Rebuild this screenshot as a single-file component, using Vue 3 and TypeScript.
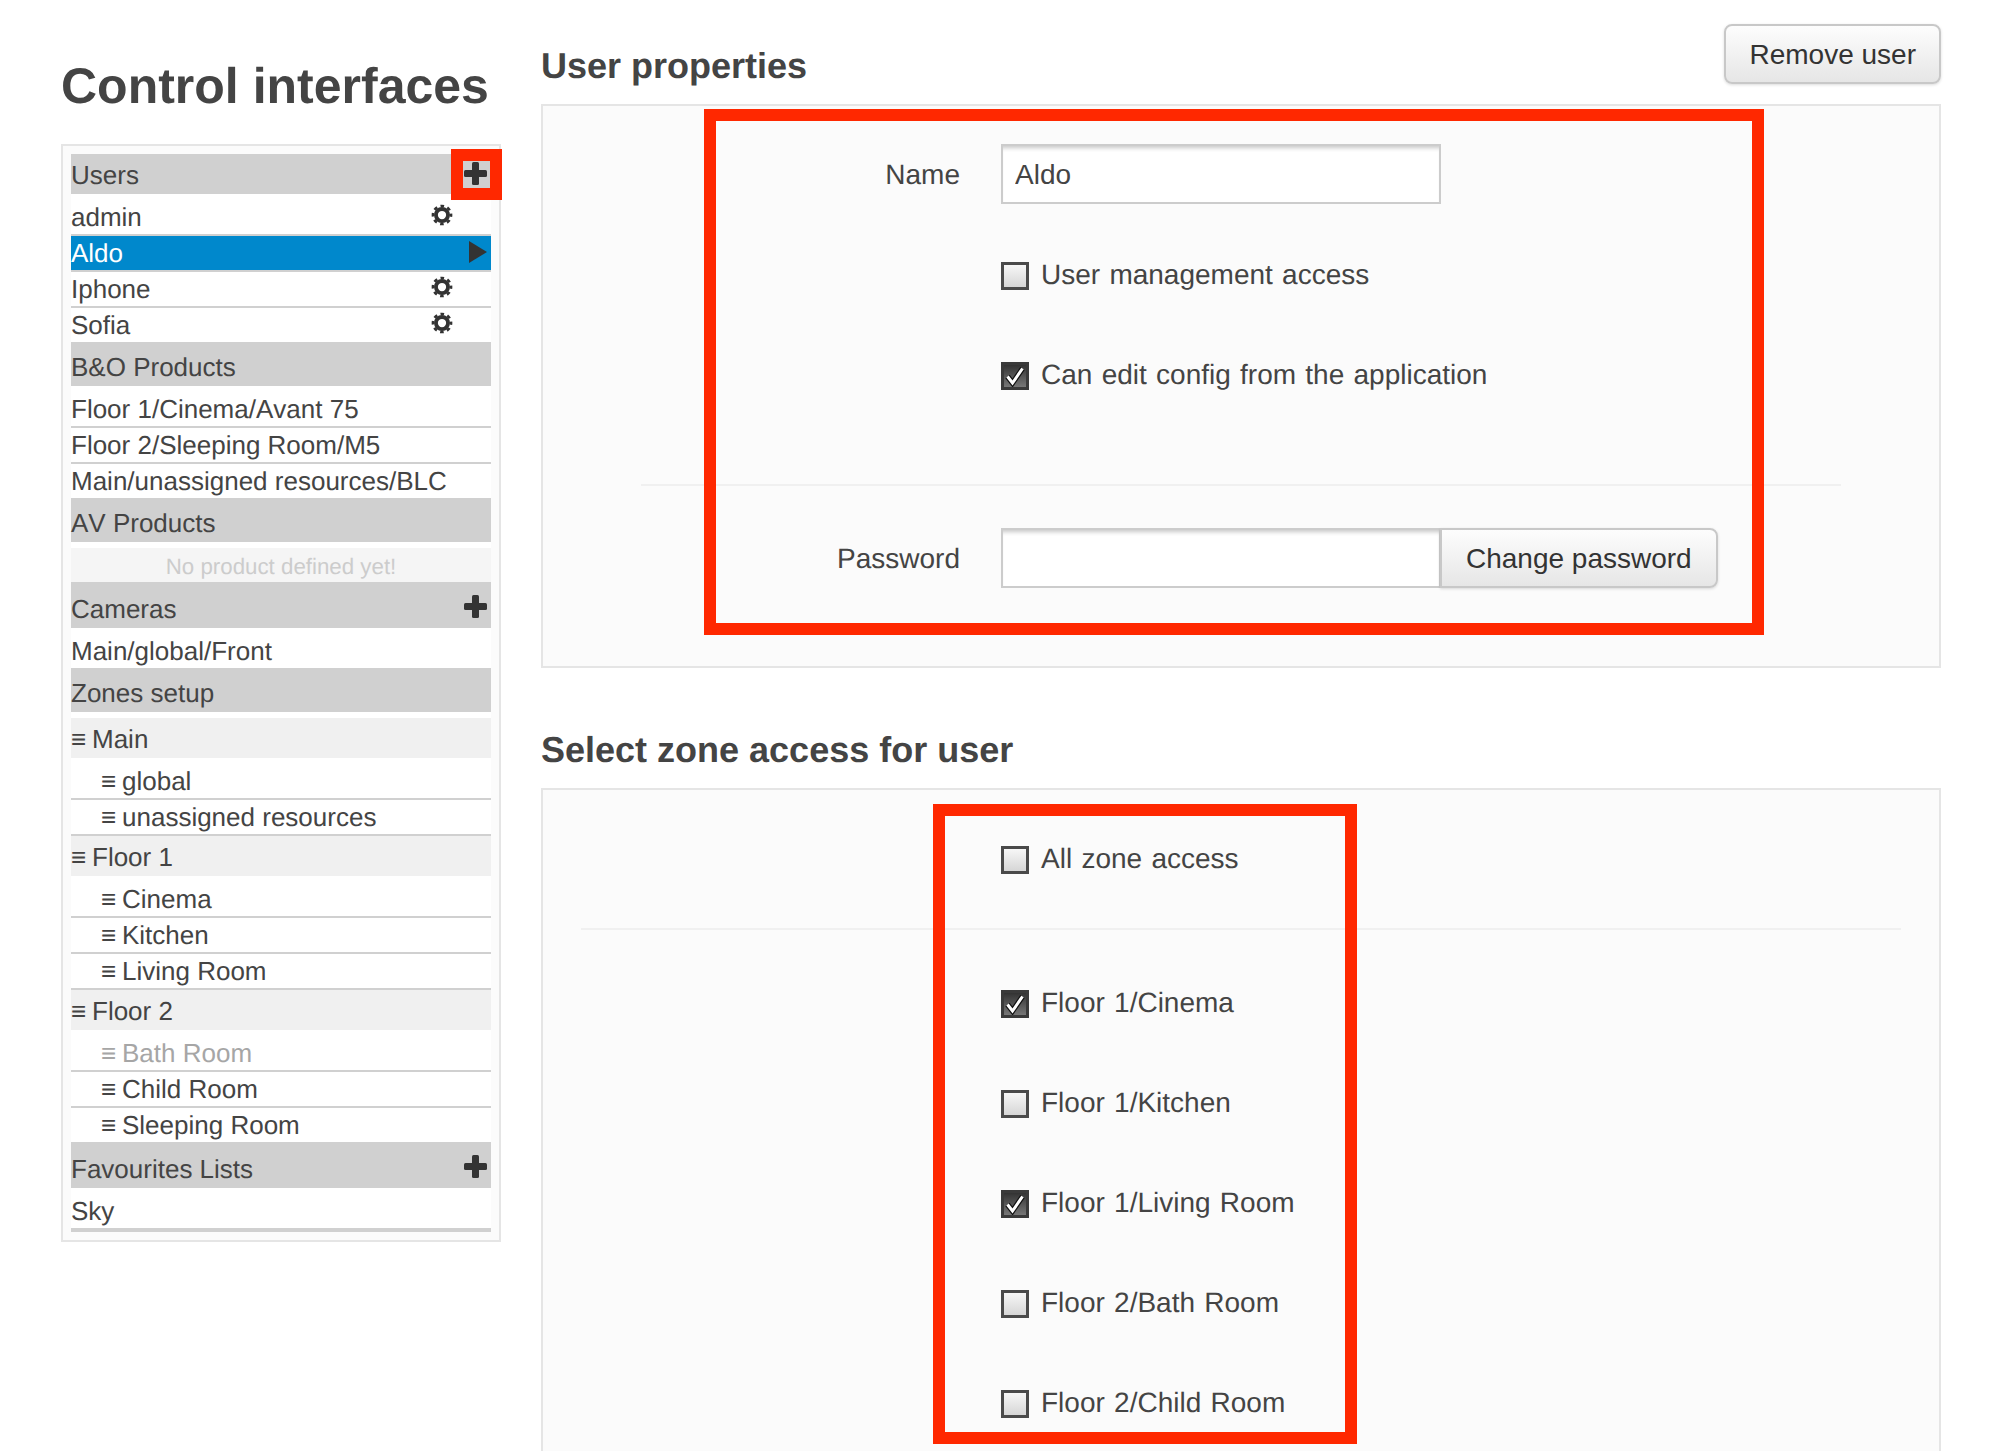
<script setup lang="ts">
interface SideRow {
  label: string;
  kind: 'head' | 'item' | 'sub' | 'group' | 'empty';
  top?: boolean; // extra space above the first row of a block
  last?: boolean; // no rule under the last row of a block
  icon?: 'plus' | 'gear' | 'arrow';
  active?: boolean;
  dim?: boolean;
  marked?: boolean;
  heavy?: boolean;
  first?: boolean;
}

const sideRows: SideRow[] = [
  { label: 'Users', kind: 'head', icon: 'plus', first: true, marked: true },
  { label: 'admin', kind: 'item', top: true, icon: 'gear' },
  { label: 'Aldo', kind: 'item', active: true, icon: 'arrow' },
  { label: 'Iphone', kind: 'item', icon: 'gear' },
  { label: 'Sofia', kind: 'item', last: true, icon: 'gear' },
  { label: 'B&O Products', kind: 'head' },
  { label: 'Floor 1/Cinema/Avant 75', kind: 'item', top: true },
  { label: 'Floor 2/Sleeping Room/M5', kind: 'item' },
  { label: 'Main/unassigned resources/BLC', kind: 'item', last: true },
  { label: 'AV Products', kind: 'head' },
  { label: 'No product defined yet!', kind: 'empty' },
  { label: 'Cameras', kind: 'head', icon: 'plus' },
  { label: 'Main/global/Front', kind: 'item', top: true, last: true },
  { label: 'Zones setup', kind: 'head' },
  { label: 'Main', kind: 'group', top: true },
  { label: 'global', kind: 'sub', top: true },
  { label: 'unassigned resources', kind: 'sub' },
  { label: 'Floor 1', kind: 'group' },
  { label: 'Cinema', kind: 'sub', top: true },
  { label: 'Kitchen', kind: 'sub' },
  { label: 'Living Room', kind: 'sub' },
  { label: 'Floor 2', kind: 'group' },
  { label: 'Bath Room', kind: 'sub', top: true, dim: true },
  { label: 'Child Room', kind: 'sub' },
  { label: 'Sleeping Room', kind: 'sub', last: true },
  { label: 'Favourites Lists', kind: 'head', icon: 'plus' },
  { label: 'Sky', kind: 'item', top: true, heavy: true }
];

const zones = [
  { label: 'Floor 1/Cinema', on: true },
  { label: 'Floor 1/Kitchen', on: false },
  { label: 'Floor 1/Living Room', on: true },
  { label: 'Floor 2/Bath Room', on: false },
  { label: 'Floor 2/Child Room', on: false }
];
</script>

<template>
  <div class="page">
    <aside class="side">
      <h1>Control interfaces</h1>
      <div class="side-panel">
        <div class="list">
          <div
            v-for="row in sideRows"
            :key="row.label"
            class="row"
            :class="[row.kind, { top: row.top, last: row.last, active: row.active, dim: row.dim, first: row.first, heavy: row.heavy }]"
          >
            <span class="row-label"><template v-if="row.kind === 'sub' || row.kind === 'group'"><span class="bars">≡</span></template>{{ row.label }}</span>
            <svg v-if="row.icon === 'plus'" class="plus" viewBox="0 0 23 23" width="23" height="23">
              <rect x="8" y="0" width="7" height="23" rx="1.5" />
              <rect x="0" y="8" width="23" height="7" rx="1.5" />
            </svg>
            <svg v-if="row.icon === 'gear'" class="gear" viewBox="0 0 24 24" width="22" height="22">
              <circle cx="12" cy="12" r="6.6" fill="none" stroke="#333" stroke-width="4.2" />
              <circle cx="12" cy="12" r="9.8" fill="none" stroke="#333" stroke-width="3" stroke-dasharray="3.9 3.8" stroke-dashoffset="1.95" />
            </svg>
            <svg v-if="row.icon === 'arrow'" class="arrow" viewBox="0 0 18 22" width="18" height="22">
              <path d="M0 0 L18 11 L0 22 Z" />
            </svg>
            <div v-if="row.marked" class="mark mark-plus"></div>
          </div>
        </div>
      </div>
    </aside>

    <main class="content">
      <header class="content-head">
        <h2>User properties</h2>
        <button class="btn btn-remove">Remove user</button>
      </header>
      <section class="panel user-panel">
        <div class="field">
          <label>Name</label>
          <input class="text-input" type="text" value="Aldo" />
        </div>
        <div class="checks">
          <div class="check">
            <span class="box"></span>User management access
          </div>
          <div class="check">
            <span class="box on">
              <svg viewBox="0 0 22 22" width="22" height="22">
                <path d="M3.5 11.5 L8.5 18 L18.5 3.5" fill="none" stroke="#111" stroke-width="5.4" />
                <path d="M3.5 11.5 L8.5 18 L18.5 3.5" fill="none" stroke="#fff" stroke-width="3" />
              </svg>
            </span>Can edit config from the application
          </div>
        </div>
        <hr class="rule user-rule" />
        <div class="field">
          <label>Password</label>
          <div class="joined">
            <input class="text-input" type="password" />
            <button class="btn btn-joined">Change password</button>
          </div>
        </div>
        <div class="mark mark-user"></div>
      </section>

      <h2 class="zone-title">Select zone access for user</h2>
      <section class="panel zone-panel">
        <div class="check zone-all">
          <span class="box"></span>All zone access
        </div>
        <hr class="rule zone-rule" />
        <div class="zone-list">
          <div v-for="zone in zones" :key="zone.label" class="check">
            <span class="box" :class="{ on: zone.on }">
              <svg v-if="zone.on" viewBox="0 0 22 22" width="22" height="22">
                <path d="M3.5 11.5 L8.5 18 L18.5 3.5" fill="none" stroke="#111" stroke-width="5.4" />
                <path d="M3.5 11.5 L8.5 18 L18.5 3.5" fill="none" stroke="#fff" stroke-width="3" />
              </svg>
            </span>{{ zone.label }}
          </div>
        </div>
        <div class="mark mark-zone"></div>
      </section>
    </main>
  </div>
</template>

<style scoped>
.page {
  display: flex;
  gap: 40px;
  height: 1451px;
  padding: 0 52px 0 61px;
  box-sizing: border-box;
  overflow: hidden;
  background: #fff;
  color: #444;
  font-family: "Liberation Sans", Arial, sans-serif;
  font-size: 28px;
  font-kerning: none;
  font-variant-ligatures: none;
  text-rendering: geometricPrecision;
}

/* sidebar */
.side {
  width: 440px;
  flex: none;
}

h1 {
  margin: 56px 0 28px;
  font-size: 50px;
  line-height: 60px;
  font-weight: 700;
  white-space: nowrap;
}

.side-panel {
  border: 2px solid #e5e5e5;
  background: #fbfbfb;
  padding: 8px;
}

.list {
  background: #fff;
  font-size: 26px;
}

.row {
  position: relative;
  display: flex;
  align-items: flex-start;
  justify-content: space-between;
  line-height: 34px;
  white-space: nowrap;
}

.head {
  background: #d0d0d0;
  padding: 8px 0 2px;
}

.head:has(.plus) {
  padding: 10px 0 2px;
}

.head.first:has(.plus) {
  padding: 4px 0 2px;
}

.item,
.sub {
  border-bottom: 2px solid #d0d0d0;
}

.item.top,
.sub.top {
  padding-top: 6px;
}

.item.last,
.sub.last {
  border-bottom: 0;
}

.item.heavy {
  border-bottom-width: 4px;
}

.item.active {
  background: #0088cc;
  color: #fff;
}

.sub {
  padding-left: 30px;
}

.sub.dim {
  color: #a6a6a6;
}

.group {
  background: #f0f0f0;
  padding: 4px 0 2px;
}

.group.top {
  margin-top: 6px;
}

.empty {
  justify-content: center;
  margin-top: 6px;
  padding-top: 3px;
  background: #f5f5f5;
  color: #ccc;
  font-size: 22.3px;
  line-height: 31px;
}

.bars {
  display: inline-block;
  width: 21px;
}

.plus {
  flex: none;
  margin: 3px 4px 0 0;
  fill: #333;
}

.head.first .plus {
  margin-top: 4px;
}

.gear {
  flex: none;
  margin: 4px 38px 0 0;
}

.arrow {
  flex: none;
  margin: 5px 4px 0 0;
  fill: #333;
}

/* right column */
.content {
  flex: 1;
  min-width: 0;
}

.content-head {
  display: flex;
  justify-content: space-between;
  align-items: flex-start;
  padding-top: 24px;
  margin-bottom: 16px;
}

h2 {
  margin: 20px 0 0;
  font-size: 36px;
  line-height: 44px;
  font-weight: 700;
}

.zone-title {
  margin: 60px 0 16px;
}

.panel {
  position: relative;
  box-sizing: border-box;
  border: 2px solid #e5e5e5;
  background: #fbfbfb;
}

.user-panel {
  height: 564px;
  padding: 38px 0 0;
}

.zone-panel {
  height: 720px;
  padding: 56px 0 0;
}

.field {
  display: grid;
  grid-template-columns: 417px 1fr;
  column-gap: 41px;
}

.field label {
  height: 60px;
  text-align: right;
  line-height: 62px;
}

.text-input {
  display: block;
  box-sizing: border-box;
  width: 440px;
  height: 60px;
  padding: 2px 12px 0;
  border: 2px solid #ccc;
  border-radius: 0;
  background: #fff;
  box-shadow: inset 0 5px 4px -3px rgba(0, 0, 0, 0.22);
  color: #444;
  font: inherit;
  outline: none;
}

.joined {
  display: flex;
}

.btn {
  box-sizing: border-box;
  height: 60px;
  padding: 2px 24px 0;
  border: 2px solid #c8c8c8;
  border-radius: 8px;
  background: linear-gradient(#fdfdfd, #e6e6e6);
  box-shadow: 0 1px 3px rgba(0, 0, 0, 0.14);
  color: #333;
  font: inherit;
  white-space: nowrap;
}

.btn-remove {
  padding: 2px 23px 0;
}

.btn-joined {
  margin-left: -1px;
  border-radius: 0 8px 8px 0;
}

.checks {
  display: flex;
  flex-direction: column;
  gap: 72px;
  margin: 58px 0 0 458px;
}

.check {
  display: flex;
  align-items: flex-start;
  line-height: 26px;
  height: 28px;
  white-space: nowrap;
  word-spacing: 1.5px;
}

.box {
  flex: none;
  box-sizing: border-box;
  display: flex;
  align-items: center;
  justify-content: center;
  width: 28px;
  height: 28px;
  margin-right: 12px;
  border: 3px solid #4a4a4a;
  background: linear-gradient(#f7f7f7, #d6d6d6);
}

.box.on {
  border-color: #3a3a3a;
  background: linear-gradient(#333, #777);
}

.rule {
  height: 2px;
  padding: 0;
  border: 0;
  background: #f0f0f0;
}

.user-rule {
  margin: 94px 98px 42px;
}

.zone-all {
  margin-left: 458px;
}

.zone-rule {
  margin: 54px 38px 60px;
}

.zone-list {
  display: flex;
  flex-direction: column;
  gap: 72px;
  margin-left: 458px;
}

/* red annotation frames lying over the screenshot */
.mark {
  position: absolute;
  box-sizing: border-box;
  border: 12px solid #ff2800;
  pointer-events: none;
}

.mark-plus {
  top: -5px;
  left: 380px;
  width: 51px;
  height: 51px;
}

.mark-user {
  top: 3px;
  left: 161px;
  width: 1060px;
  height: 526px;
}

.mark-zone {
  top: 14px;
  left: 390px;
  width: 424px;
  height: 640px;
}
</style>

<style>
html,
body {
  margin: 0;
  overflow: hidden;
}
</style>
